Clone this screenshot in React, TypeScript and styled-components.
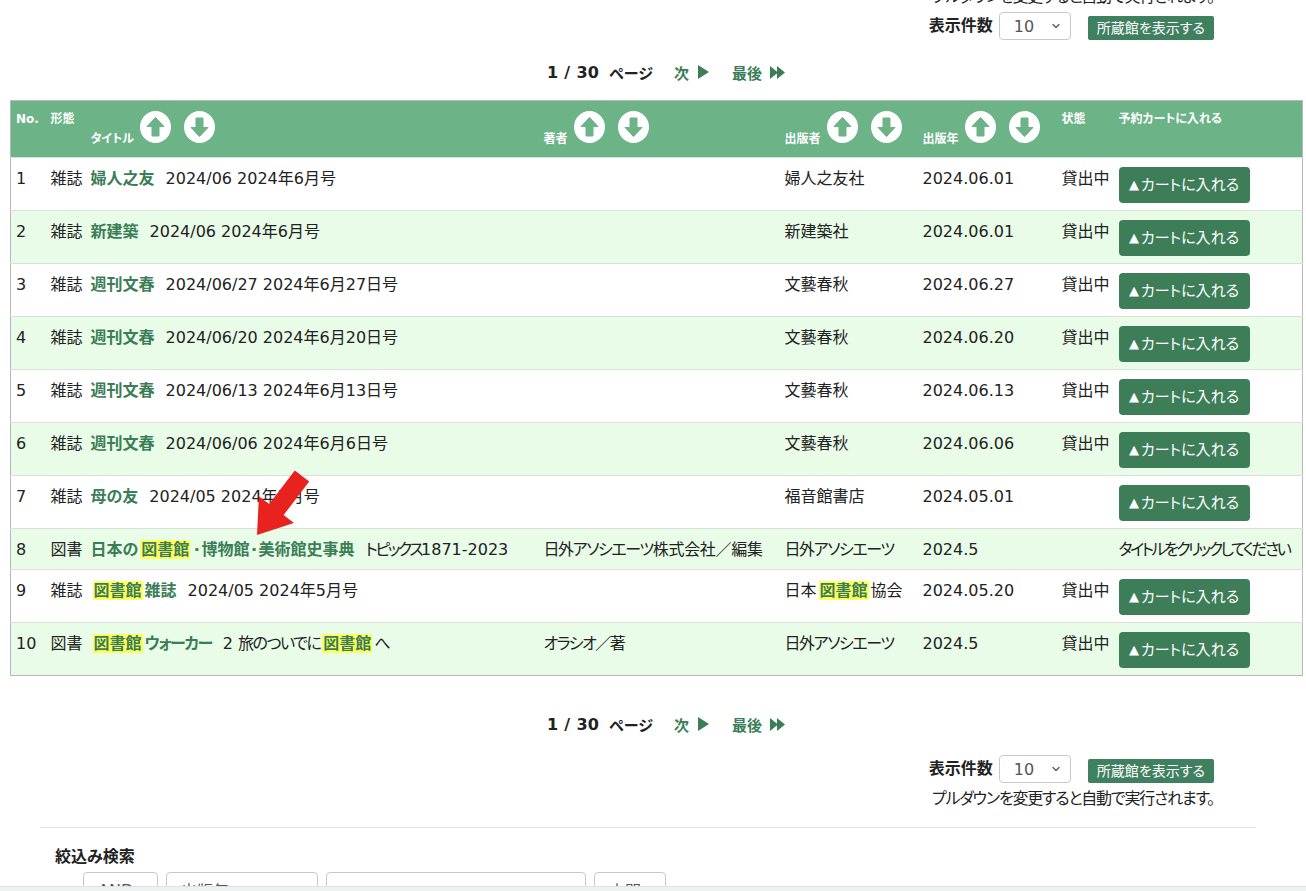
import React from 'react';
import styled, { createGlobalStyle } from 'styled-components';
import { ChevronDown } from 'lucide-react';

const FONT = `"DejaVu Sans", "Noto Sans CJK JP", sans-serif`;
const GREEN = '#3b7d57';
const HEAD = '#6cb387';
const ALT = '#e8fce8';

const GlobalStyle = createGlobalStyle`
  html, body { margin: 0; padding: 0; background: #fff; }
  body {
    font-family: ${FONT};
    font-size: 16px;
    color: #222;
    overflow: hidden;
    font-feature-settings: "palt";
  }
  #root { width: 1306px; }
`;

const Page = styled.div`
  position: relative;
  margin-top: -14px;
  padding: 0 4px 0 10px;
`;

const ControlsBar = styled.div`
  display: flex;
  justify-content: flex-end;
  padding-right: 88px;
`;

const ControlsBlock = styled.div`
  display: flex;
  flex-direction: column;
  align-items: flex-end;
`;

const Note = styled.div<{ $mt?: number }>`
  font-size: 16px;
  line-height: 22px;
  letter-spacing: -1.2px;
  margin-top: ${(p) => p.$mt ?? 0}px;
  color: #222;
`;

const ControlRow = styled.div<{ $mt: number }>`
  display: flex;
  align-items: center;
  margin-top: ${(p) => p.$mt}px;
`;

const CountLabel = styled.span`
  font-weight: bold;
  font-size: 16px;
  line-height: 24px;
`;

const SelectBox = styled.div<{ $w: number; $h: number; $ml?: number }>`
  box-sizing: border-box;
  width: ${(p) => p.$w}px;
  height: ${(p) => p.$h}px;
  margin-left: ${(p) => p.$ml ?? 0}px;
  border: 1px solid #c9c9c9;
  border-radius: 4px;
  background: #fff;
  display: flex;
  align-items: center;
  justify-content: space-between;
  padding: 0 8px 0 14px;
  color: #555;
  font-size: 16px;
`;

const ShowButton = styled.div`
  align-self: flex-end;
  margin-left: 17px;
  height: 24px;
  padding: 0 9px;
  background: #3f8060;
  color: #fff;
  font-size: 14px;
  line-height: 24px;
  border-radius: 2px;
`;

const Pager = styled.div<{ $mt: number }>`
  display: flex;
  justify-content: center;
  align-items: center;
  margin-top: ${(p) => p.$mt}px;
  padding-left: 20px;
  height: 24px;
  font-weight: bold;
  font-size: 16px;
`;

const PageCount = styled.span`
  color: #222;
  letter-spacing: 0.3px;
`;

const PageWord = styled.span`
  margin-left: 10px;
  font-size: 15px;
`;

const PagerLink = styled.span<{ $ml: number }>`
  margin-left: ${(p) => p.$ml}px;
  color: ${GREEN};
  display: inline-flex;
  align-items: center;
  gap: 8px;
  font-size: 15px;
`;

const TableWrap = styled.div`
  position: relative;
  margin-top: 16px;
`;

const Table = styled.table`
  width: 1292px;
  table-layout: fixed;
  border-collapse: collapse;
  border: 1px solid #b8b8b8;
`;

const HeadRow = styled.tr`
  background: ${HEAD};
`;

const Th = styled.th`
  height: 57px;
  box-sizing: border-box;
  padding: 10px 5px 0;
  vertical-align: top;
  text-align: left;
  font-size: 12px;
  font-weight: bold;
  color: #fff;
  line-height: 16px;
  white-space: nowrap;
`;

const SortSvg = styled.svg<{ $gap: number }>`
  margin-left: ${(p) => p.$gap}px;
  vertical-align: baseline;
`;

const Row = styled.tr<{ $alt: boolean }>`
  background: ${(p) => (p.$alt ? ALT : '#fff')};
  border-top: 1px solid #d9dfd9;
`;

const Td = styled.td`
  padding: 9px 5px 7px;
  vertical-align: top;
  font-size: 16px;
  line-height: 24px;
  white-space: nowrap;
  overflow: visible;
`;

const TitleLink = styled.span`
  color: ${GREEN};
  font-weight: bold;
  margin-right: 11px;
`;

const Mark = styled.span`
  background: #ffff5c;
  color: ${GREEN};
  font-weight: bold;
  margin: 0 2px;
  padding: 0 1px;
`;

const Kana = styled.span<{ $ls: number }>`
  letter-spacing: ${(p) => p.$ls}px;
`;

const Dot = styled.span`
  padding: 0 1.5px;
`;

const CartButton = styled.div`
  box-sizing: border-box;
  width: 131px;
  height: 36px;
  display: inline-flex;
  align-items: center;
  justify-content: center;
  background: #3d7e59;
  color: #fff;
  border-radius: 4px;
  font-size: 15px;
  vertical-align: top;
`;

const Tri = styled.span`
  font-size: 13px;
  margin-right: 2px;
`;

const Arrow = styled.svg`
  position: absolute;
  left: 220px;
  top: 365px;
  pointer-events: none;
`;

const Divider = styled.div`
  margin: 17px 46px 0 30px;
  border-top: 1px solid #e3e3e3;
`;

const FilterSection = styled.div`
  padding-left: 45px;
  margin-top: 17px;
`;

const FilterTitle = styled.div`
  font-weight: bold;
  font-size: 16px;
  line-height: 24px;
`;

const FilterRow = styled.div`
  display: flex;
  gap: 8px;
  margin-top: 3px;
  padding-left: 28px;
`;

const TextInput = styled.div`
  box-sizing: border-box;
  width: 260px;
  height: 36px;
  border: 1px solid #c9c9c9;
  border-radius: 4px;
`;

const ScrollStrip = styled.div`
  position: fixed;
  left: 0;
  right: 0;
  bottom: 0;
  height: 4px;
  background: #eef2f2;
  border-top: 1px solid #dde3e3;
`;

type Seg = string | { m: string } | { k: string; ls?: number } | { d: string };

type Item = {
  no: number;
  type: string;
  title: Seg[];
  rest: Seg[];
  author: Seg[];
  pub: Seg[];
  year: string;
  status: string;
  cart: boolean;
  note?: string;
};

const NIKKAI: Seg = { k: '日外アソシエーツ', ls: -1.4 };

const items: Item[] = [
  { no: 1, type: '雑誌', title: ['婦人之友'], rest: ['2024/06 2024年6月号'], author: [], pub: ['婦人之友社'], year: '2024.06.01', status: '貸出中', cart: true },
  { no: 2, type: '雑誌', title: ['新建築'], rest: ['2024/06 2024年6月号'], author: [], pub: ['新建築社'], year: '2024.06.01', status: '貸出中', cart: true },
  { no: 3, type: '雑誌', title: ['週刊文春'], rest: ['2024/06/27 2024年6月27日号'], author: [], pub: ['文藝春秋'], year: '2024.06.27', status: '貸出中', cart: true },
  { no: 4, type: '雑誌', title: ['週刊文春'], rest: ['2024/06/20 2024年6月20日号'], author: [], pub: ['文藝春秋'], year: '2024.06.20', status: '貸出中', cart: true },
  { no: 5, type: '雑誌', title: ['週刊文春'], rest: ['2024/06/13 2024年6月13日号'], author: [], pub: ['文藝春秋'], year: '2024.06.13', status: '貸出中', cart: true },
  { no: 6, type: '雑誌', title: ['週刊文春'], rest: ['2024/06/06 2024年6月6日号'], author: [], pub: ['文藝春秋'], year: '2024.06.06', status: '貸出中', cart: true },
  { no: 7, type: '雑誌', title: ['母の友'], rest: ['2024/05 2024年5月号'], author: [], pub: ['福音館書店'], year: '2024.05.01', status: '', cart: true },
  {
    no: 8,
    type: '図書',
    title: ['日本の', { m: '図書館' }, { d: '·' }, '博物館', { d: '·' }, '美術館史事典'],
    rest: [{ k: 'トピックス', ls: -2.5 }, '1871-2023'],
    author: [NIKKAI, { k: '株式会社／編集', ls: -0.3 }],
    pub: [NIKKAI],
    year: '2024.5',
    status: '',
    cart: false,
    note: 'タイトルをクリックしてください',
  },
  { no: 9, type: '雑誌', title: [{ m: '図書館' }, '雑誌'], rest: ['2024/05 2024年5月号'], author: [], pub: ['日本', { m: '図書館' }, '協会'], year: '2024.05.20', status: '貸出中', cart: true },
  {
    no: 10,
    type: '図書',
    title: [{ m: '図書館' }, { k: 'ウォーカー', ls: -1.4 }],
    rest: ['2 ', { k: '旅のついでに', ls: -1.5 }, { m: '図書館' }, 'へ'],
    author: [{ k: 'オラシオ／著', ls: -1.5 }],
    pub: [NIKKAI],
    year: '2024.5',
    status: '貸出中',
    cart: true,
  },
];

const widths = [35, 40, 453, 241, 138, 139, 57, 189];

function renderSegs(segs: Seg[]) {
  return segs.map((s, i) => {
    if (typeof s === 'string') return <React.Fragment key={i}>{s}</React.Fragment>;
    if ('m' in s) return <Mark key={i}>{s.m}</Mark>;
    if ('d' in s) return <Dot key={i}>{s.d}</Dot>;
    return (
      <Kana key={i} $ls={s.ls ?? -1.5}>
        {s.k}
      </Kana>
    );
  });
}

function SortIcon({ dir, gap }: { dir: 'up' | 'down'; gap: number }) {
  const d =
    dir === 'up'
      ? 'M15.5 6.5 L24 15.5 L19 15.5 L19 25 L12 25 L12 15.5 L7 15.5 Z'
      : 'M15.5 25.5 L24 16.5 L19 16.5 L19 7 L12 7 L12 16.5 L7 16.5 Z';
  return (
    <SortSvg $gap={gap} width="31" height="32" viewBox="0 0 31 32">
      <ellipse cx="15.5" cy="16" rx="15.5" ry="16" fill="#fff" />
      <path d={d} fill={HEAD} strokeLinejoin="round" stroke={HEAD} strokeWidth="1" />
    </SortSvg>
  );
}

function SortHead({ label }: { label: string }) {
  return (
    <>
      {label}
      <SortIcon dir="up" gap={6} />
      <SortIcon dir="down" gap={13} />
    </>
  );
}

function NextTri() {
  return (
    <svg width="12" height="14" viewBox="0 0 12 14">
      <path d="M1 0 L12 7 L1 14 Z" fill={GREEN} />
    </svg>
  );
}

function LastTri() {
  return (
    <svg width="15" height="13" viewBox="0 0 15 13">
      <path d="M0 0 L8 6.5 L0 13 Z M7 0 L15 6.5 L7 13 Z" fill={GREEN} />
    </svg>
  );
}

function Pagination({ mt }: { mt: number }) {
  return (
    <Pager $mt={mt}>
      <PageCount>1 / 30</PageCount>
      <PageWord>ページ</PageWord>
      <PagerLink $ml={21}>
        次<NextTri />
      </PagerLink>
      <PagerLink $ml={23}>
        最後<LastTri />
      </PagerLink>
    </Pager>
  );
}

function CountControls({ mt }: { mt: number }) {
  return (
    <ControlRow $mt={mt}>
      <CountLabel>表示件数</CountLabel>
      <SelectBox $w={72} $h={28} $ml={6}>
        10
        <ChevronDown size={12} strokeWidth={3} color="#666" />
      </SelectBox>
      <ShowButton>所蔵館を表示する</ShowButton>
    </ControlRow>
  );
}

export default function App() {
  return (
    <>
      <GlobalStyle />
      <Page>
        <ControlsBar>
          <ControlsBlock>
            <Note>プルダウンを変更すると自動で実行されます。</Note>
            <CountControls mt={4} />
          </ControlsBlock>
        </ControlsBar>

        <Pagination mt={20} />

        <TableWrap>
          <Table>
            <colgroup>
              {widths.map((w, i) => (
                <col key={i} style={{ width: w }} />
              ))}
            </colgroup>
            <thead>
              <HeadRow>
                <Th>No.</Th>
                <Th>形態</Th>
                <Th>
                  <SortHead label="タイトル" />
                </Th>
                <Th>
                  <SortHead label="著者" />
                </Th>
                <Th>
                  <SortHead label="出版者" />
                </Th>
                <Th>
                  <SortHead label="出版年" />
                </Th>
                <Th>状態</Th>
                <Th>予約カートに入れる</Th>
              </HeadRow>
            </thead>
            <tbody>
              {items.map((it) => (
                <Row key={it.no} $alt={it.no % 2 === 0}>
                  <Td>{it.no}</Td>
                  <Td>{it.type}</Td>
                  <Td>
                    <TitleLink>{renderSegs(it.title)}</TitleLink>
                    {renderSegs(it.rest)}
                  </Td>
                  <Td>{renderSegs(it.author)}</Td>
                  <Td>{renderSegs(it.pub)}</Td>
                  <Td>{it.year}</Td>
                  <Td>{it.status}</Td>
                  <Td>
                    {it.cart ? (
                      <CartButton>
                        <Tri>▲</Tri>カートに入れる
                      </CartButton>
                    ) : (
                      <Kana $ls={-2.5}>{it.note}</Kana>
                    )}
                  </Td>
                </Row>
              ))}
            </tbody>
          </Table>
          <Arrow width="85" height="75" viewBox="0 0 85 75">
            <polygon
              points="64.8,5.5 79.2,16.5 53.6,50.1 63.9,57.9 27,70 28.9,31.3 39.2,39.1"
              fill="#e8231f"
            />
          </Arrow>
        </TableWrap>

        <Pagination mt={36} />

        <ControlsBar>
          <ControlsBlock>
            <CountControls mt={19} />
            <Note $mt={5}>プルダウンを変更すると自動で実行されます。</Note>
          </ControlsBlock>
        </ControlsBar>

        <Divider />

        <FilterSection>
          <FilterTitle>絞込み検索</FilterTitle>
          <FilterRow>
            <SelectBox $w={75} $h={36}>
              AND
              <ChevronDown size={12} strokeWidth={3} color="#666" />
            </SelectBox>
            <SelectBox $w={152} $h={36}>
              出版年
              <ChevronDown size={12} strokeWidth={3} color="#666" />
            </SelectBox>
            <TextInput />
            <SelectBox $w={72} $h={36}>
              中間
              <ChevronDown size={12} strokeWidth={3} color="#666" />
            </SelectBox>
          </FilterRow>
        </FilterSection>
      </Page>
      <ScrollStrip />
    </>
  );
}
